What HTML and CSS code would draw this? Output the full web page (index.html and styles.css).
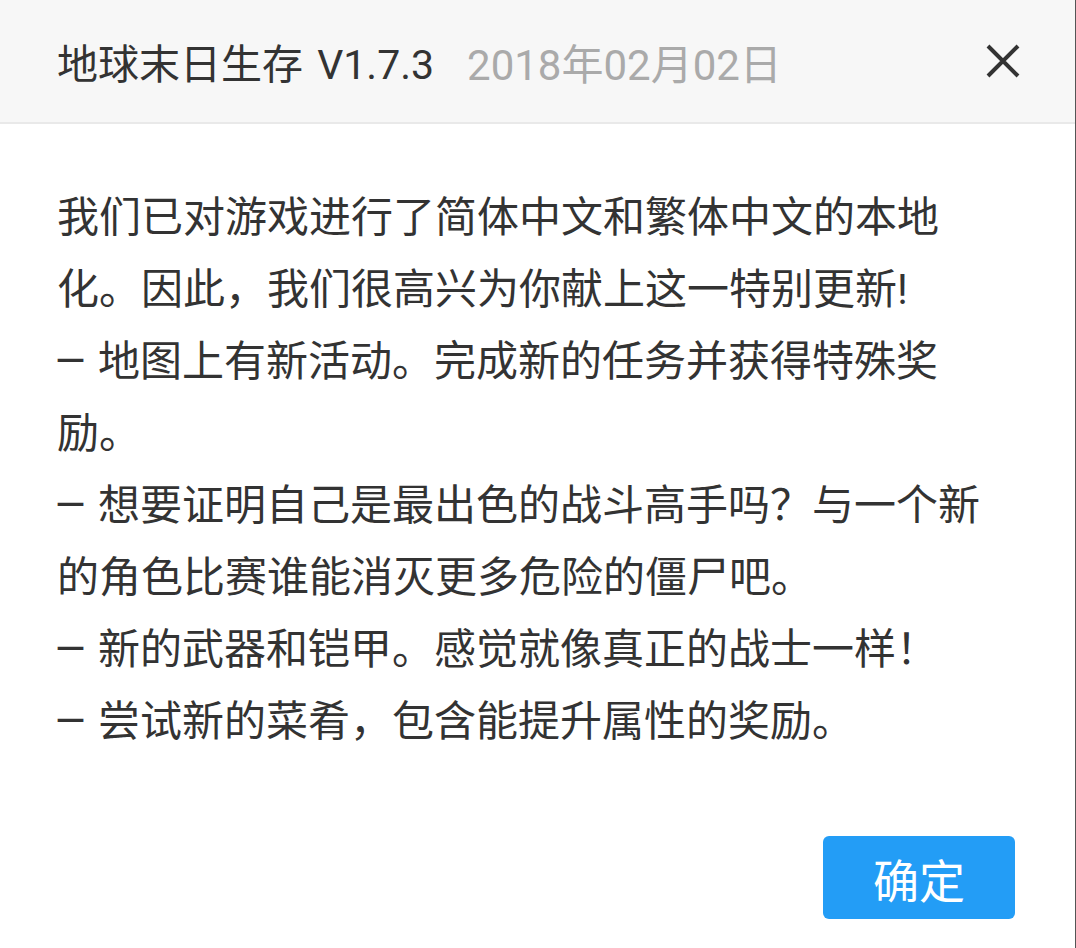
FILE: index.html
```html
<!DOCTYPE html>
<html lang="zh-CN">
<head>
    <meta charset="UTF-8">
    <meta name="viewport" content="width=device-width, initial-scale=1.0">
    <title>更新公告</title>
    <link rel="stylesheet" href="styles.css">
</head>
<body>
<div class="dialog">
    <div class="dialog-header">
        <span class="title">地球末日生存 V1.7.3</span>
        <span class="date">2018年02月02日</span>
        <span class="close">
            <svg width="36" height="36" viewBox="0 0 36 36">
                <path d="M3 3 L33 33 M33 3 L3 33" stroke="#333" stroke-width="4" fill="none"/>
            </svg>
        </span>
    </div>
    <div class="dialog-body">
        <p>我们已对游戏进行了简体中文和繁体中文的本地<br>化。因此，我们很高兴为你献上这一特别更新!</p>
        <p><span class="dash">–</span> 地图上有新活动。完成新的任务并获得特殊奖<br>励。</p>
        <p><span class="dash">–</span> 想要证明自己是最出色的战斗高手吗？与一个新<br>的角色比赛谁能消灭更多危险的僵尸吧。</p>
        <p><span class="dash">–</span> 新的武器和铠甲。感觉就像真正的战士一样！</p>
        <p><span class="dash">–</span> 尝试新的菜肴，包含能提升属性的奖励。</p>
    </div>
    <div class="dialog-footer">
        <button type="button" class="ok-button">确定</button>
    </div>
</div>
</body>
</html>
```

FILE: styles.css
```css
/* 更新公告弹窗 */
body {
    margin: 0;
    padding: 0;
    font-family: Roboto, "Noto Sans CJK SC", sans-serif;
    background-color: #fff;
    color: #333;
}
.dialog {
    width: 1076px;
    height: 948px;
    box-sizing: border-box;
    border-right: 1px solid #555;
    display: flex;
    flex-direction: column;
}
.dialog-header {
    height: 122px;
    background-color: #f7f7f7;
    border-bottom: 2px solid #e9e9e9;
    display: flex;
    align-items: center;
    padding: 0 54px 0 57px;
}
.dialog-header .title {
    font-size: 41px;
    color: #333;
    word-spacing: 4px;
}
.dialog-header .date {
    font-size: 42px;
    color: #aaa;
    margin-left: 33px;
}
.dialog-header .close {
    margin-left: auto;
    display: flex;
    cursor: pointer;
}
.dialog-body {
    padding: 58px 40px 0 57px;
    font-size: 42px;
    line-height: 72px;
}
.dialog-body p {
    margin: 0;
    white-space: nowrap;
}
.dialog-body .dash {
    display: inline-block;
    transform: scaleX(1.25);
    margin-right: 3px;
}
.dialog-footer {
    margin-top: auto;
    display: flex;
    justify-content: flex-end;
    padding: 0 60px 29px 0;
}
.ok-button {
    width: 192px;
    height: 83px;
    border: none;
    border-radius: 6px;
    background-color: #239df6;
    color: #fff;
    font-family: Roboto, "Noto Sans CJK SC", sans-serif;
    font-size: 46px;
    cursor: pointer;
}
```
